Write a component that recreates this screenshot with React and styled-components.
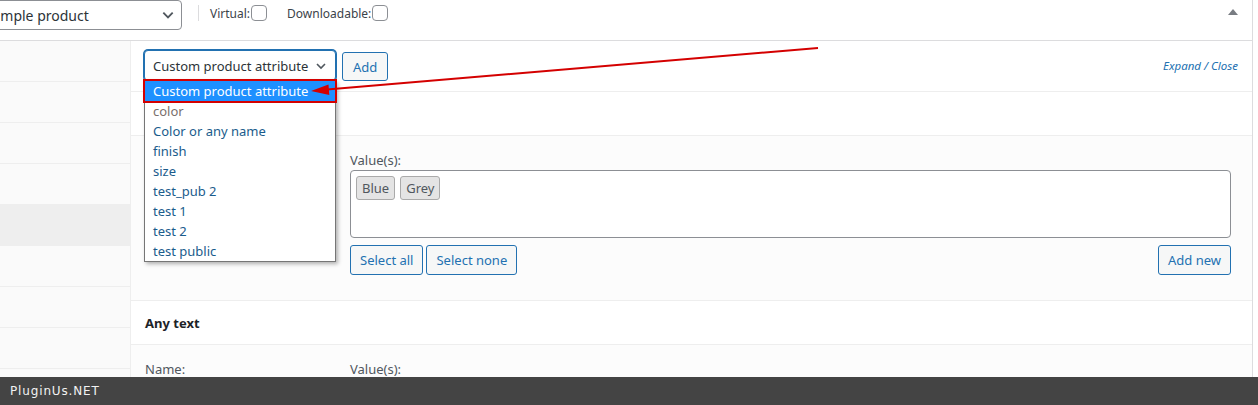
import React from "react";
import styled, { createGlobalStyle } from "styled-components";

const GlobalStyle = createGlobalStyle`
  html, body {
    margin: 0;
    padding: 0;
    background: #fff;
  }
  body {
    font-family: "Noto Sans", "Open Sans", sans-serif;
    font-size: 13px;
    color: #3c434a;
  }
  * { box-sizing: border-box; }
`;

const tabs = [false, false, false, false, true, false, false, false];
const options = [
  "Custom product attribute",
  "color",
  "Color or any name",
  "finish",
  "size",
  "test_pub 2",
  "test 1",
  "test 2",
  "test public",
];

const Chevron = ({ size = 12 }) => (
  <svg width={size} height={size} viewBox="0 0 12 12">
    <polyline points="2,4 6,8 10,4" fill="none" stroke="#50575e" strokeWidth="1.6" />
  </svg>
);

const App = () => {
  return (
    <>
      <GlobalStyle />
      <Screen>
        <Panel>
          <TopBar>
            <ProductSelect>
              <span>Simple product</span>
              <Chevron size={14} />
            </ProductSelect>
            <Divider />
            <CheckLabel>
              Virtual:<Box />
            </CheckLabel>
            <CheckLabel gap={20}>
              Downloadable:<Box />
            </CheckLabel>
            <Toggle />
          </TopBar>
          <Body>
            <Sidebar>
              {tabs.map((active, i) => (
                <Tab key={i} active={active} />
              ))}
            </Sidebar>
            <Main>
              <Toolbar>
                <SelectWrap>
                  <AttrSelect>
                    <span>Custom product attribute</span>
                    <Chevron />
                  </AttrSelect>
                  <Dropdown>
                    {options.map((o, i) => (
                      <Option key={o} selected={i === 0} muted={i === 1}>
                        {o}
                      </Option>
                    ))}
                  </Dropdown>
                  <Mark />
                </SelectWrap>
                <Button small>Add</Button>
                <ExpandLink>Expand / Close</ExpandLink>
              </Toolbar>
              <AttrHeader />
              <AttrBody>
                <div />
                <div>
                  <FieldLabel>Value(s):</FieldLabel>
                  <TagBox>
                    <Tag>Blue</Tag>
                    <Tag>Grey</Tag>
                  </TagBox>
                  <ButtonRow>
                    <Button>Select all</Button>
                    <Button>Select none</Button>
                    <Button push>Add new</Button>
                  </ButtonRow>
                </div>
              </AttrBody>
              <AttrHeader title>Any text</AttrHeader>
              <AttrBody>
                <FieldLabel>Name:</FieldLabel>
                <FieldLabel>Value(s):</FieldLabel>
              </AttrBody>
            </Main>
          </Body>
        </Panel>
        <Footer>PluginUs.NET</Footer>
        <Arrow width="1258" height="405" viewBox="0 0 1258 405">
          <line x1="818" y1="48" x2="327" y2="89.6" stroke="#d40000" strokeWidth="2" />
          <polygon points="311,91 329.3,95 328.5,84.5" fill="#d40000" />
        </Arrow>
      </Screen>
    </>
  );
};

const Screen = styled.div`
  position: relative;
  width: 1258px;
  height: 405px;
  overflow: hidden;
  display: flex;
  flex-direction: column;
  background: #fff;
`;

const Panel = styled.div`
  width: 1253px;
  height: 377px;
  border-right: 1px solid #dcdcde;
  overflow: hidden;
  display: flex;
  flex-direction: column;
`;

const TopBar = styled.div`
  height: 41px;
  flex-shrink: 0;
  border-bottom: 1px solid #dcdcde;
  display: flex;
  align-items: flex-start;
`;

const ProductSelect = styled.div`
  width: 202px;
  height: 30px;
  margin-left: -20px;
  padding: 0 6px 0 8px;
  border: 1px solid #8c8f94;
  border-radius: 4px;
  display: flex;
  align-items: center;
  justify-content: space-between;
  font-size: 14px;
  color: #2c3338;
`;

const Divider = styled.div`
  width: 1px;
  height: 16px;
  margin: 5px 11px 0 16px;
  background: #dcdcde;
`;

const CheckLabel = styled.label`
  display: flex;
  align-items: center;
  margin-top: 5px;
  margin-left: ${(p) => p.gap || 0}px;
  font-size: 12px;
  color: #3c434a;
  height: 16px;
`;

const Box = styled.span`
  width: 16px;
  height: 16px;
  margin-left: 1px;
  border: 1px solid #8c8f94;
  border-radius: 4px;
  background: #fff;
`;

const Toggle = styled.span`
  margin: 9px 14px 0 auto;
  width: 0;
  height: 0;
  border-left: 5px solid transparent;
  border-right: 5px solid transparent;
  border-bottom: 6px solid #787c82;
`;

const Body = styled.div`
  flex: 1;
  display: flex;
  min-height: 0;
`;

const Sidebar = styled.div`
  width: 131px;
  flex-shrink: 0;
  background: #fafafa;
  border-right: 1px solid #eee;
`;

const Tab = styled.div`
  height: 41px;
  border-bottom: 1px solid #eee;
  background: ${(p) => (p.active ? "#eee" : "transparent")};
`;

const Main = styled.div`
  flex: 1;
  min-width: 0;
  background: #fff;
`;

const Toolbar = styled.div`
  height: 51px;
  padding: 9px 14px 0 13px;
  border-bottom: 1px solid #eee;
  display: flex;
  align-items: flex-start;
`;

const SelectWrap = styled.div`
  position: relative;
`;

const AttrSelect = styled.div`
  width: 192px;
  height: 31px;
  padding: 0 8px 0 8px;
  border: 1px solid #2271b1;
  box-shadow: 0 0 0 1px #2271b1;
  border-radius: 4px;
  display: flex;
  align-items: center;
  justify-content: space-between;
  color: #2c3338;
  font-size: 13px;
  background: #fff;
`;

const Dropdown = styled.div`
  position: absolute;
  top: 30px;
  left: 0;
  width: 192px;
  border: 1px solid #767676;
  background: #fff;
  box-shadow: 2px 2px 4px rgba(0, 0, 0, 0.3);
  z-index: 5;
`;

const Option = styled.div`
  height: 20px;
  line-height: 20px;
  padding-left: 8px;
  font-size: 13px;
  white-space: nowrap;
  background: ${(p) => (p.selected ? "#1e90ff" : "transparent")};
  color: ${(p) => (p.selected ? "#fff" : p.muted ? "#7a706c" : "#1a5c8c")};
`;

const Mark = styled.div`
  position: absolute;
  top: 29px;
  left: -1px;
  width: 194px;
  height: 24px;
  border: 2px solid #d40000;
  z-index: 6;
`;

const Button = styled.button`
  height: ${(p) => (p.small ? 29 : 30)}px;
  margin: ${(p) => (p.small ? "2px 0 0 6px" : "0")};
  margin-left: ${(p) => (p.push ? "auto" : p.small ? "6px" : "0")};
  padding: 0 ${(p) => (p.small ? 10 : 9)}px;
  border: 1px solid #2271b1;
  border-radius: 3px;
  background: #f6f7f7;
  color: #2271b1;
  font-family: inherit;
  font-size: 13px;
`;

const ExpandLink = styled.a`
  margin: 8px 0 0 auto;
  font-size: 11.5px;
  font-style: italic;
  color: #2271b1;
`;

const AttrHeader = styled.div`
  height: 44px;
  padding-left: 14px;
  border-bottom: 1px solid #eee;
  display: flex;
  align-items: center;
  font-weight: bold;
  color: #1d2327;
`;

const AttrBody = styled.div`
  min-height: 165px;
  padding: 15px 21px 0 14px;
  background: #fcfcfc;
  border-bottom: 1px solid #eee;
  display: grid;
  grid-template-columns: 205px 1fr;
  align-content: start;
`;

const FieldLabel = styled.div`
  line-height: 18px;
  color: #50575e;
`;

const TagBox = styled.div`
  height: 68px;
  margin-top: 1px;
  padding: 5px 5px;
  border: 1px solid #8c8f94;
  border-radius: 4px;
  background: #fff;
  display: flex;
  align-items: flex-start;
  gap: 5px;
`;

const Tag = styled.span`
  height: 24px;
  line-height: 22px;
  padding: 0 5px;
  border: 1px solid #aaa;
  border-radius: 3px;
  background: #e4e4e4;
  color: #50575e;
`;

const ButtonRow = styled.div`
  margin-top: 7px;
  display: flex;
  gap: 3px;
`;

const Footer = styled.div`
  height: 28px;
  flex-shrink: 0;
  background: #444;
  color: #f2f2f2;
  padding-left: 10px;
  display: flex;
  align-items: center;
  font-family: "DejaVu Sans", sans-serif;
  font-size: 12px;
  letter-spacing: 0.85px;
`;

const Arrow = styled.svg`
  position: absolute;
  top: 0;
  left: 0;
  pointer-events: none;
  z-index: 10;
`;

export default App;
